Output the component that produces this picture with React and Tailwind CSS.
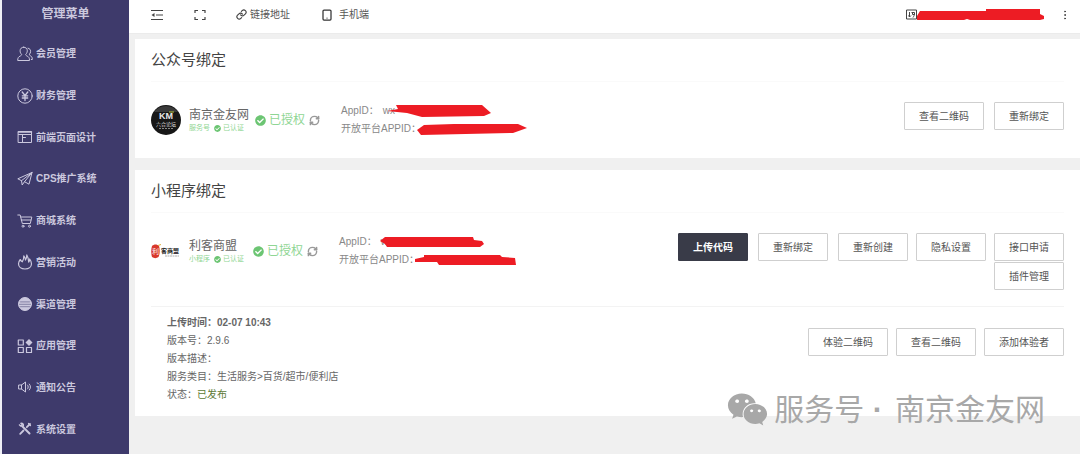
// Account binding page of the merchant admin
import { FaCheckCircle, FaWeixin } from 'react-icons/fa';
import { Link, MoreVertical, RefreshCw, Tablet } from 'lucide-react';

const iconProps = {
  viewBox: '0 0 16 16',
  fill: 'none',
  stroke: 'currentColor',
  strokeWidth: 1,
  strokeLinejoin: 'round',
  strokeLinecap: 'round',
  className: 'size-4 shrink-0',
  'aria-hidden': true,
};

const icons = {
  member: (
    <svg {...iconProps}>
      <path d="M6.7 1.2c2.2 0 3.6 1.5 3.6 3.6 0 1.6-.7 2.7-1.6 3.5 0 1 .5 1.3 1.5 1.8 1.6.8 2.3 1.6 2.3 4.4H.7c0-2.700.8-3.600 2.400-4.400 1-.5 1.500-.8 1.500-1.800C3.700 7.500 3.100 6.400 3.100 4.800c0-2.100 1.400-3.600 3.600-3.600z" />
      <path d="M11 2.200c1.700.3 2.600 1.500 2.600 3.100 0 1.400-.5 2.200-1.200 2.900 0 1 .3 1.200 1.100 1.600 1.200.7 1.800 1.500 1.800 3.700h-1" />
    </svg>
  ),
  finance: (
    <svg {...iconProps}>
      <circle cx="8" cy="8" r="7.2" />
      <path d="M5.200 4L8 7.500 10.800 4M8 7.500v5M5.300 7.800h5.400M5.300 10h5.400" strokeWidth="1.3" />
    </svg>
  ),
  design: (
    <svg {...iconProps}>
      <path d="M1.500 2.500h13v11h-13zM1.500 5.500h13M5.500 5.500v8M5.500 8.500h3" />
      <path d="M1.500 3h13" strokeWidth="1.5" />
    </svg>
  ),
  cps: (
    <svg {...iconProps}>
      <path d="M15 1.500L.8 7.800l3.700 1.900L15 1.500l-3 11.700-4.500-2.500M4.500 9.700l.7 4.300 2.300-3.300L15 1.500" />
    </svg>
  ),
  mall: (
    <svg {...iconProps}>
      <path d="M.8 2h2.400l2.100 8.500h8L14.800 4H3.700M4.200 7h9.700" />
      <circle cx="6" cy="13.2" r="1" />
      <circle cx="12.5" cy="13.2" r="1" />
    </svg>
  ),
  campaign: (
    <svg {...iconProps} strokeWidth={1.2}>
      <path d="M3.300 5.500C2 7 1.500 8.500 1.500 9.800c0 3 2.700 5.200 6.500 5.200s6.500-2.200 6.500-5.200c0-1.800-.6-3.300-1.800-4.800 0 1.300-.3 2.200-1 3C11.700 5.300 11 3 9.800 1c0 2-.4 3.500-1.300 5C8.400 4.500 7.800 3 6.800 2c.1 2-.3 3.800-1.500 5.800C4.500 7.300 3.600 6.500 3.300 5.500z" />
    </svg>
  ),
  channel: (
    <svg {...iconProps}>
      <circle cx="8" cy="8" r="6.5" fill="currentColor" />
      <path d="M3.500 5.900h9M2.500 8.300h11M3.500 10.700h9" stroke="#3e3a6b" strokeWidth="0.5" />
    </svg>
  ),
  apps: (
    <svg {...iconProps} strokeWidth={1.2}>
      <path d="M1.300 2h5v5h-5zM1.300 9.500h5v5h-5zM9.500 9.500h5v5h-5z" />
      <path d="M12 1.100l3.500 3.500L12 8.100 8.500 4.600z" fill="currentColor" stroke="none" />
    </svg>
  ),
  notice: (
    <svg {...iconProps}>
      <path d="M2 6h2.500l4-3v10l-4-3H2zM4.500 6v4M10.500 6c1 1 1 3 0 4M12.300 5c1.600 1.600 1.600 4.400 0 6" />
    </svg>
  ),
  settings: (
    <svg {...iconProps}>
      <path d="M5 5l7.500 7.500" strokeWidth="2" />
      <path d="M2.300 3.800l1.500 1.400 1.400-1.400L3.800 2.300c1.800-.4 3 .7 2.700 2.500" strokeWidth="1.200" />
      <path d="M13 3L9.800 6.200M6.500 9.500l-3.300 3.300" strokeWidth="1.800" />
      <path d="M11.500 2.500l2 2" strokeWidth="1.200" />
    </svg>
  ),
};

const menu = [
  { icon: 'member', label: '会员管理' },
  { icon: 'finance', label: '财务管理' },
  { icon: 'design', label: '前端页面设计' },
  { icon: 'cps', label: 'CPS推广系统' },
  { icon: 'mall', label: '商城系统' },
  { icon: 'campaign', label: '营销活动' },
  { icon: 'channel', label: '渠道管理' },
  { icon: 'apps', label: '应用管理' },
  { icon: 'notice', label: '通知公告' },
  { icon: 'settings', label: '系统设置' },
];

function Sidebar() {
  return (
    <aside className="flex w-[129px] shrink-0 flex-col border-l-2 border-[#efeff6] bg-[#3e3a6b] pb-1 text-[#cbc8de]">
      <h1 className="flex h-7 items-center justify-center text-[12px] font-bold">管理菜单</h1>
      <nav className="flex flex-1 flex-col pt-[5px]">
        {menu.map((item) => (
          <a key={item.icon} href="#" className="flex flex-1 items-center gap-[3px] pl-[15px] text-[10px] font-bold">
            {icons[item.icon]}
            {item.label}
          </a>
        ))}
      </nav>
    </aside>
  );
}

function Topbar() {
  return (
    <header className="flex h-[34px] items-center border-b border-[#ebebeb] bg-white pr-[9px] pb-1 pl-[22px] text-[10px] text-[#555]">
      <button type="button" aria-label="收起菜单" className="w-[43px]">
        <svg viewBox="0 0 12 12" className="size-3" fill="none" stroke="#444" strokeWidth="1.2">
          <path d="M0 1.500h12M5 6h7M0 10.500h12" />
          <path d="M3.500 4v4L.5 6z" fill="#444" stroke="none" />
        </svg>
      </button>
      <button type="button" aria-label="全屏" className="w-[42px]">
        <svg viewBox="0 0 12 12" className="size-3" fill="none" stroke="#444" strokeWidth="1.2">
          <path d="M1 4V1.500h3M8 1.500h3V4M11 8v2.500H8M4 10.500H1V8" />
        </svg>
      </button>
      <a href="#" className="flex w-[85px] items-center gap-[3px]">
        <Link className="size-[11px] text-[#444]" strokeWidth={2.5} />
        链接地址
      </a>
      <a href="#" className="flex items-center gap-1.5">
        <Tablet className="size-3 text-[#333]" strokeWidth={2.5} />
        手机端
      </a>
      <div className="ml-auto flex items-center">
        <svg viewBox="0 0 11 11" className="size-[11px]" fill="none" stroke="#444">
          <path d="M.5 1h10v9H.5zM3.500 3v5M2.500 6.500l1 1.500 1.500-1.500M5.500 3.500h3v2h-2v-2M8.500 4c0 2-.5 3-1.500 4.500" />
        </svg>
        <svg viewBox="0 0 128 12" className="h-3 w-32" fill="#ed1c24">
          <path d="M0 7l3-5h66V0h54v5l4 2v3l-4 1H53l-3-1-3 1H0z" />
        </svg>
        <button type="button" aria-label="更多" className="ml-3.5">
          <MoreVertical className="size-3 text-[#444]" />
        </button>
      </div>
    </header>
  );
}

function Button({ children, primary }) {
  const look = primary ? 'border-[#393b48] bg-[#393b48] font-bold text-white' : 'border-[#cfcfcf] bg-white text-[#555]';
  return (
    <button type="button" className={`h-7 rounded-[1px] border px-[14px] text-[10px] whitespace-nowrap ${look}`}>
      {children}
    </button>
  );
}

function Account({ logo, name, kind, appId, appIdMark, platformMark }) {
  return (
    <div className="flex items-center">
      {logo}
      <div className="ml-2 min-w-[58px]">
        <div className="text-[12px] leading-4 text-[#666]">{name}</div>
        <div className="flex items-center text-[7px] leading-[10px] text-[#8fd694]">
          {kind}
          <FaCheckCircle className="mr-0.5 ml-1 size-[7px] text-[#6cc573]" />
          已认证
        </div>
      </div>
      <div className="ml-1.5 flex items-center text-[12px] text-[#8fd694]">
        <FaCheckCircle className="mr-[3px] size-[11px] text-[#6cc573]" />
        已授权
        <RefreshCw className="ml-1 size-[11px] text-[#999]" strokeWidth={3.2} />
      </div>
      <div className="ml-[21px] text-[10px] leading-[18px] text-[#888]">
        <div className="flex items-center">
          AppID：
          <span className="ml-1">{appId}</span>
          {appIdMark}
        </div>
        <div className="flex items-center">
          开放平台APPID：
          {platformMark}
        </div>
      </div>
    </div>
  );
}

function Card({ title, children }) {
  return (
    <section className="bg-white px-4">
      <h2 className="flex h-[43px] items-center border-b border-[#fafafa] text-[15px] text-[#444]">{title}</h2>
      {children}
    </section>
  );
}

const officialLogo = (
  <svg viewBox="0 0 30 30" className="size-[30px] shrink-0" role="img" aria-label="南京金友网">
    <circle cx="15" cy="15" r="15" fill="#171717" />
    <path d="M3 7a15 15 0 0 1 24 0z" fill="#3a3a3a" />
    <text x="15" y="14" fontSize="9" fontWeight="bold" fill="#e8e8e8" textAnchor="middle">KM</text>
    <path d="M18 7h5" stroke="#b7c43a" />
    <text x="15" y="21" fontSize="5" fill="#ddd" textAnchor="middle">六合论坛</text>
    <path d="M8 23.500h14" stroke="#888" strokeDasharray="2 1" />
  </svg>
);

const miniLogo = (
  <svg viewBox="0 0 30 30" className="size-[30px] shrink-0" role="img" aria-label="利客商盟">
    <path d="M1 10c2-2 5-2 7 0 1 3 1 8-.5 11-2 1.500-4.500 1.500-6.500 0-1-3-1-8 0-11z" fill="#d8382c" />
    <text x="4.5" y="18" fontSize="7" fill="#fff" textAnchor="middle">利</text>
    <path d="M7 9.500l3-1" stroke="#e2b13c" />
    <text x="19" y="17" fontSize="6" fontWeight="bold" fill="#222" textAnchor="middle">客商盟</text>
    <path d="M14 20h14" stroke="#999" strokeWidth="0.8" strokeDasharray="2 .5" />
  </svg>
);

function OfficialCard() {
  return (
    <Card title="公众号绑定">
      <div className="flex items-start justify-between py-5">
        <Account
          logo={officialLogo}
          name="南京金友网"
          kind="服务号"
          appId="wx"
          appIdMark={
            <svg viewBox="0 0 104 12" className="-ml-2 h-3 w-[104px]" fill="#ed1c24">
              <path d="M0 6l11-2-2-4h86l9 8-7 3-62 1-15-4z" />
            </svg>
          }
          platformMark={
            <svg viewBox="0 0 110 12" className="-ml-1 h-3 w-[110px]" fill="#ed1c24">
              <path d="M0 7l7-5 30-1h64l9 4-14 5-92 2z" />
            </svg>
          }
        />
        <div className="flex gap-2.5">
          <Button>查看二维码</Button>
          <Button>重新绑定</Button>
        </div>
      </div>
    </Card>
  );
}

function MiniProgramCard() {
  return (
    <Card title="小程序绑定">
      <div className="flex items-start justify-between pt-5 pb-4">
        <Account
          logo={miniLogo}
          name="利客商盟"
          kind="小程序"
          appId="w"
          appIdMark={
            <svg viewBox="0 0 104 12" className="-ml-2 h-3 w-[104px]" fill="#ed1c24">
              <path d="M0 5l5-4h88l1 3 8 1 2 3-4 3H7L5 8z" />
            </svg>
          }
          platformMark={
            <svg viewBox="0 0 102 12" className="-ml-1 h-3 w-[102px]" fill="#ed1c24">
              <path d="M0 5l9-2V1h76l2 2 13 1 1 7H24l-2-3H0z" />
            </svg>
          }
        />
        <div className="flex items-start gap-2">
          <div className="flex gap-2.5">
            <Button primary>上传代码</Button>
            <Button>重新绑定</Button>
            <Button>重新创建</Button>
          </div>
          <Button>隐私设置</Button>
          <div className="flex flex-col gap-px">
            <Button>接口申请</Button>
            <Button>插件管理</Button>
          </div>
        </div>
      </div>
      <div className="flex items-start justify-between border-t border-[#f3f3f3] pt-[7px] pb-3">
        <div className="pl-4 text-[10px] leading-[18px] text-[#666]">
          <p className="font-bold">上传时间：02-07 10:43</p>
          <p>版本号：2.9.6</p>
          <p>版本描述：</p>
          <p>服务类目：生活服务&gt;百货/超市/便利店</p>
          <p>
            状态：<span className="text-[#5d7a35]">已发布</span>
          </p>
        </div>
        <div className="flex gap-2 pt-3.5">
          <Button>体验二维码</Button>
          <Button>查看二维码</Button>
          <Button>添加体验者</Button>
        </div>
      </div>
    </Card>
  );
}

export default function App() {
  return (
    <div
      lang="zh-CN"
      className="relative flex min-h-screen bg-[#f0f0f0] font-['Liberation_Sans','Noto_Sans_CJK_SC',sans-serif]"
    >
      <Sidebar />
      <div className="flex min-w-0 flex-1 flex-col">
        <Topbar />
        <main className="flex flex-col gap-3 pt-[5px] pl-1.5">
          <OfficialCard />
          <MiniProgramCard />
        </main>
      </div>
      {/* Watermark over the card's lower edge */}
      <div className="absolute right-[35px] bottom-6 flex items-center gap-1.5 text-[30px] leading-9 text-[#a8a8a8]">
        <FaWeixin className="size-[41px]" />
        <span>
          服务号 <span className="mr-1 font-bold">·</span> 南京金友网
        </span>
      </div>
    </div>
  );
}
